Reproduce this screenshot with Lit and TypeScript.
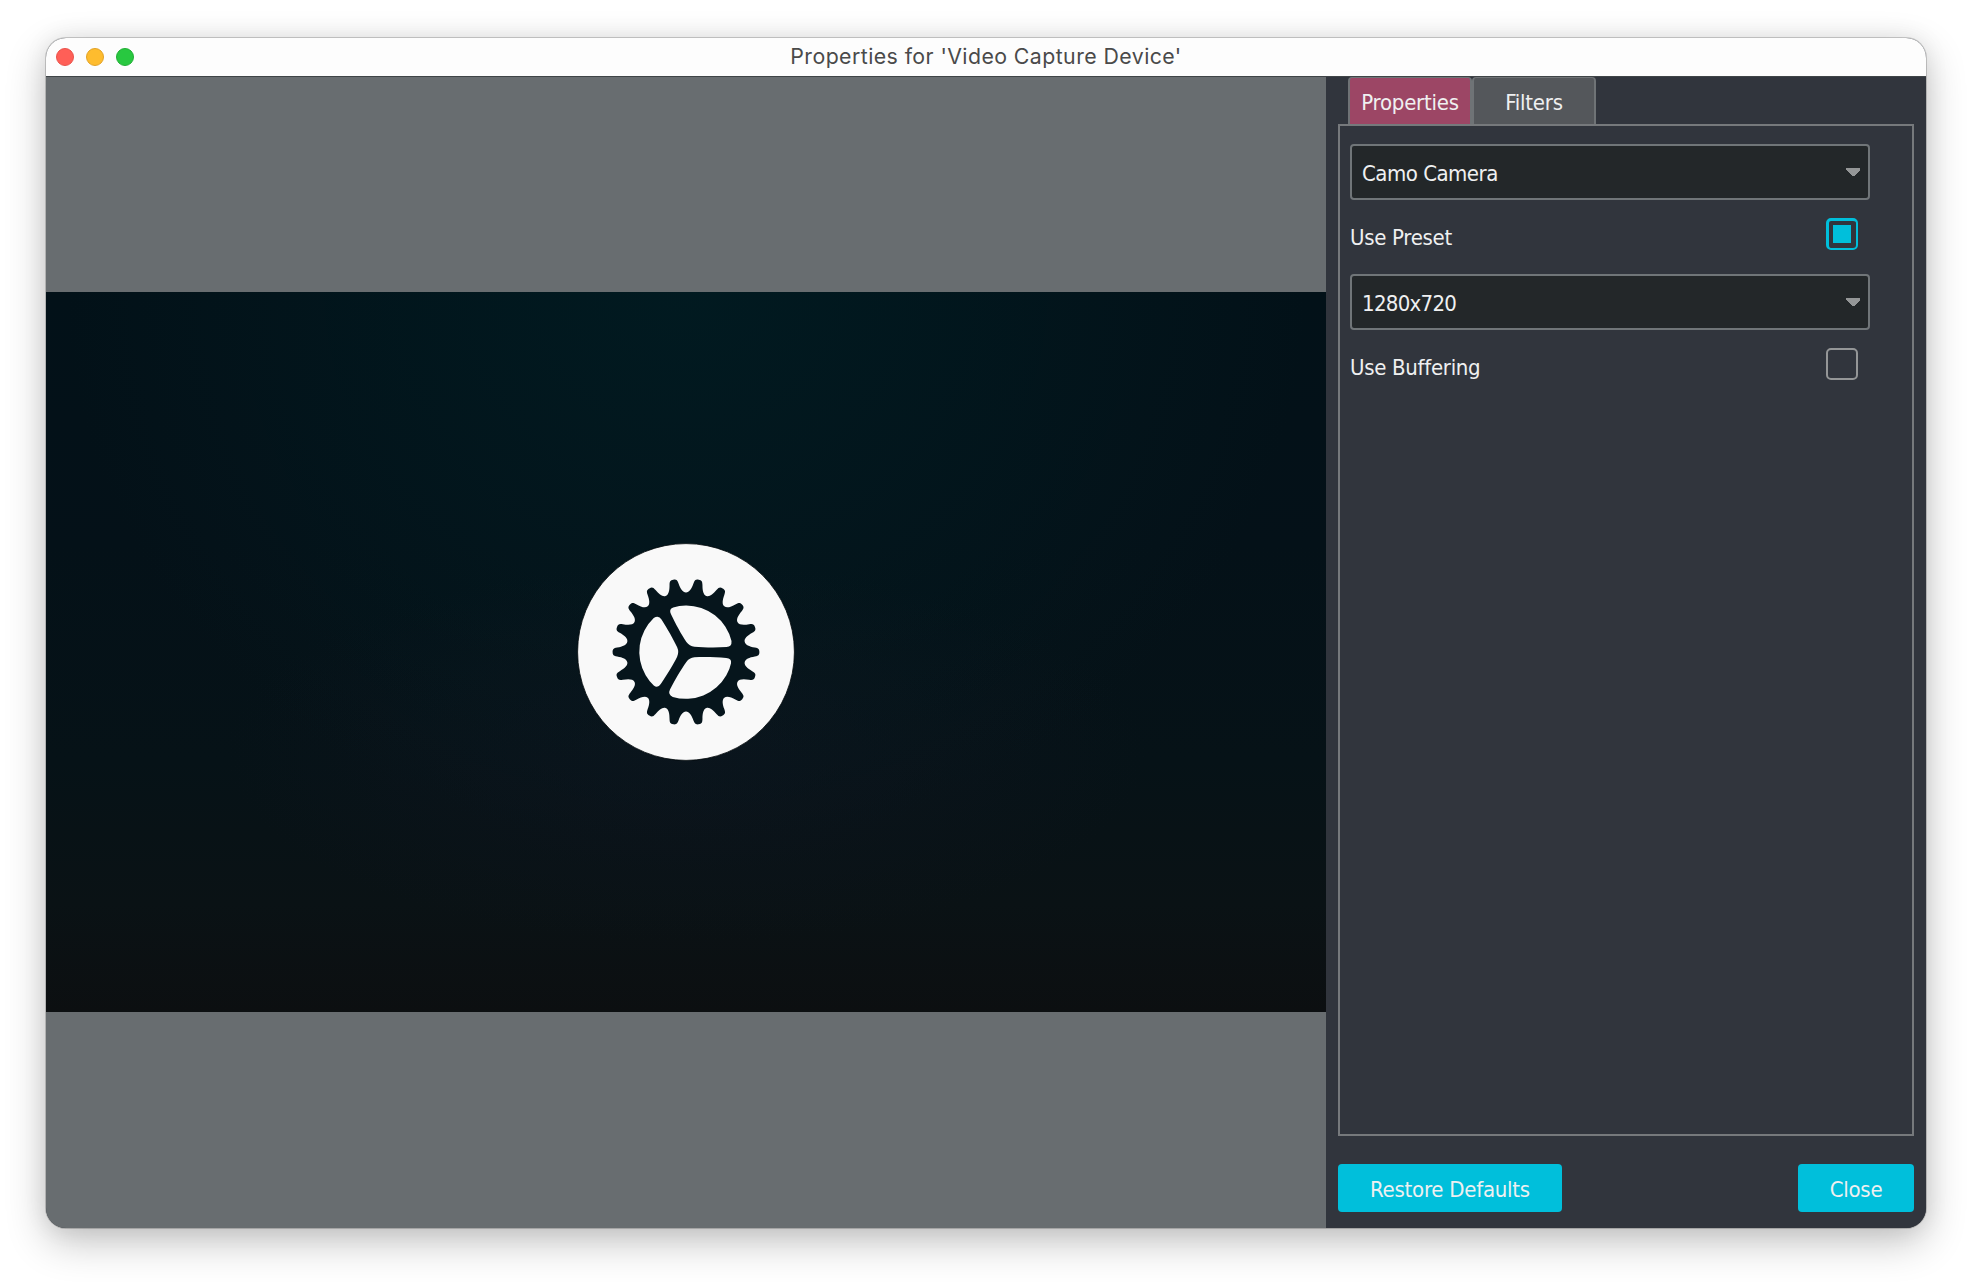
import { LitElement, html, css, svg } from "lit";
import { customElement, property } from "lit/decorators.js";

const TEETH = 18;

function gearOutline(): string {
  const step = (Math.PI * 2) / TEETH;
  const pt = (r: number, a: number) => `${(r * Math.cos(a)).toFixed(2)} ${(r * Math.sin(a)).toFixed(2)}`;
  const deg = Math.PI / 180;
  let d = `M${pt(59.6, -step / 2)}`;
  for (let i = 0; i < TEETH; i++) {
    const a = i * step;
    d += `C${pt(59.6, a - 7 * deg)} ${pt(63.5, a - 5 * deg)} ${pt(69, a - 3.8 * deg)}`;
    d += `C${pt(72.6, a - 3 * deg)} ${pt(73.4, a - 2.4 * deg)} ${pt(73.4, a)}`;
    d += `C${pt(73.4, a + 2.4 * deg)} ${pt(72.6, a + 3 * deg)} ${pt(69, a + 3.8 * deg)}`;
    d += `C${pt(63.5, a + 5 * deg)} ${pt(59.6, a + 7 * deg)} ${pt(59.6, a + step / 2)}`;
  }
  return d + "Z";
}

const HOLE =
  "M8.5 -5.3 C17 -4.5 30 -4.4 40.5 -4.9 Q46 -5.2 45.5 -11 A46.6 46.6 0 0 0 0 -46.6 Q-7 -46.6 -12.8 -44.6 Q-17.5 -42.8 -15 -37.8 C-10.5 -28.5 -4.6 -17.5 0.4 -10 Q3.4 -5.8 8.5 -5.3Z";

@customElement("gear-badge")
class GearBadge extends LitElement {
  static styles = css`
    :host { display: block; width: 218px; height: 218px; }
    svg { display: block; }
    .disc { fill: #f9f9f9; stroke: #01070a; stroke-width: 0.8; }
    .gear { fill: #06151c; }
    .hole { fill: #f9f9f9; }
  `;
  render() {
    return html`<svg width="218" height="218" viewBox="-109 -109 218 218">
      <circle class="disc" r="108.4"></circle>
      <path class="gear" d=${gearOutline()}></path>
      ${[0, 120, 240].map((a) => svg`<path class="hole" d=${HOLE} transform=${`rotate(${a})`}></path>`)}
    </svg>`;
  }
}

@customElement("combo-box")
class ComboBox extends LitElement {
  @property() value = "";
  static styles = css`
    :host {
      display: flex; align-items: center; justify-content: space-between;
      box-sizing: border-box; height: 56px; padding: 0 8px 0 10px;
      border: 2px solid #707578; border-radius: 4px; background: #232729;
    }
    .value { padding-top: 3px; }
    .arrow { display: block; margin-top: -1px; }
  `;
  render() {
    return html`<span class="value">${this.value}</span>
      <svg class="arrow" width="14" height="8" viewBox="0 0 14 8" shape-rendering="crispEdges">
        <path fill="#949697" d="M0 0H14V2L8 8H6L0 2Z"></path>
      </svg>`;
  }
}

@customElement("check-row")
class CheckRow extends LitElement {
  @property() label = "";
  @property({ type: Boolean }) checked = false;
  static styles = css`
    :host { display: flex; justify-content: space-between; align-items: center; height: 32px; padding-right: 12px; letter-spacing: -0.3px; }
    .label { padding-top: 7px; }
    .box {
      box-sizing: border-box; width: 32px; height: 32px; display: grid; place-items: center;
      border: 2px solid #949697; border-radius: 5px;
    }
    .box.on { border-width: 3px 2px 2px 3px; border-color: #00bfdb; }
    .mark { width: 18px; height: 18px; background: #00bfdb; margin-right: 1px; margin-bottom: 1px; }
  `;
  render() {
    return html`<span class="label">${this.label}</span>
      <span class="box ${this.checked ? "on" : ""}">${this.checked ? html`<span class="mark"></span>` : null}</span>`;
  }
}

@customElement("app-root")
class AppRoot extends LitElement {
  static styles = css`
    :host {
      display: block; box-sizing: border-box; width: 1972px; height: 1282px; padding: 38px 46px 54px;
      background: #fff; overflow: hidden;
      font-family: "DejaVu Sans Condensed", "DejaVu Sans", sans-serif; font-stretch: condensed;
      font-size: 22px; line-height: 28px; letter-spacing: -0.5px; color: #eff0f1; white-space: nowrap;
    }
    .window {
      display: flex; flex-direction: column; width: 1880px; height: 1190px; border-radius: 20px; overflow: hidden;
      box-shadow: 0 0 0 1px rgba(0, 0, 0, 0.18), 0 14px 40px rgba(0, 0, 0, 0.24), 0 0 24px rgba(0, 0, 0, 0.08);
      background: #31353d;
    }
    .titlebar {
      display: grid; grid-template-columns: 1fr auto 1fr; align-items: center; box-sizing: border-box;
      height: 39px; padding: 0 10px; background: #fdfdfd; border-bottom: 1px solid #3f4447;
      font-family: Inter, sans-serif; font-size: 21.3px; font-stretch: normal; letter-spacing: 0.43px; color: #4a4a4a;
    }
    .lights { display: flex; gap: 12px; }
    .light { box-sizing: border-box; width: 18px; height: 18px; border-radius: 50%; border: 1px solid; }
    .red { background: #ff5f57; border-color: #e9524a; }
    .yellow { background: #febc2e; border-color: #e2a226; }
    .green { background: #28c840; border-color: #20ae34; }
    .title { padding-bottom: 2px; }
    .body { display: flex; flex: 1; }
    .preview { display: flex; align-items: center; box-sizing: border-box; width: 1280px; padding-bottom: 1px; background: #686d70; }
    .video {
      display: grid; place-items: center; width: 1280px; height: 720px;
      background:
        radial-gradient(ellipse 620px 560px at 50% 0%, rgba(0, 32, 38, 0.6), rgba(0, 24, 32, 0) 100%),
        radial-gradient(ellipse 460px 190px at 50% 64%, rgba(13, 20, 29, 0.8), rgba(13, 20, 29, 0) 100%),
        linear-gradient(180deg, #021118 0%, #041118 35%, #061217 65%, #0a1215 85%, #0c0f11 100%);
    }
    .side { display: flex; flex-direction: column; flex: 1; padding: 0 12px 16px; background: #31353d; }
    .tabs { display: flex; padding-left: 10px; }
    .tab {
      display: flex; align-items: center; justify-content: center; box-sizing: border-box; width: 124px; height: 47px;
      padding-top: 4px; border: 2px solid #6f7376; border-width: 1px 2px 0; border-radius: 4px 4px 0 0;
      background: #54575b; letter-spacing: -0.25px;
    }
    .tab.active { background: #9c4665; }
    .pane {
      display: flex; flex-direction: column; box-sizing: border-box; height: 1012px;
      padding: 18px 42px 0 10px; border: 2px solid #76797c;
    }
    check-row { margin: 18px 0 24px; }
    .digits { letter-spacing: -0.7px; }
    .actions { display: flex; justify-content: space-between; margin-top: 28px; }
    .btn {
      height: 48px; padding: 3px 0 0; border: 0; border-radius: 4px; background: #00bfdb; color: #eff0f1;
      font: inherit; letter-spacing: -0.25px;
    }
    .restore { width: 224px; }
    .close { width: 116px; }
  `;
  render() {
    return html`<div class="window">
      <div class="titlebar">
        <div class="lights"><span class="light red"></span><span class="light yellow"></span><span class="light green"></span></div>
        <div class="title">Properties for 'Video Capture Device'</div>
      </div>
      <div class="body">
        <div class="preview"><div class="video"><gear-badge></gear-badge></div></div>
        <div class="side">
          <div class="tabs">
            <div class="tab active">Properties</div>
            <div class="tab">Filters</div>
          </div>
          <div class="pane">
            <combo-box value="Camo Camera"></combo-box>
            <check-row label="Use Preset" checked></check-row>
            <combo-box class="digits" value="1280x720"></combo-box>
            <check-row label="Use Buffering"></check-row>
          </div>
          <div class="actions">
            <button class="btn restore">Restore Defaults</button>
            <button class="btn close">Close</button>
          </div>
        </div>
      </div>
    </div>`;
  }
}
